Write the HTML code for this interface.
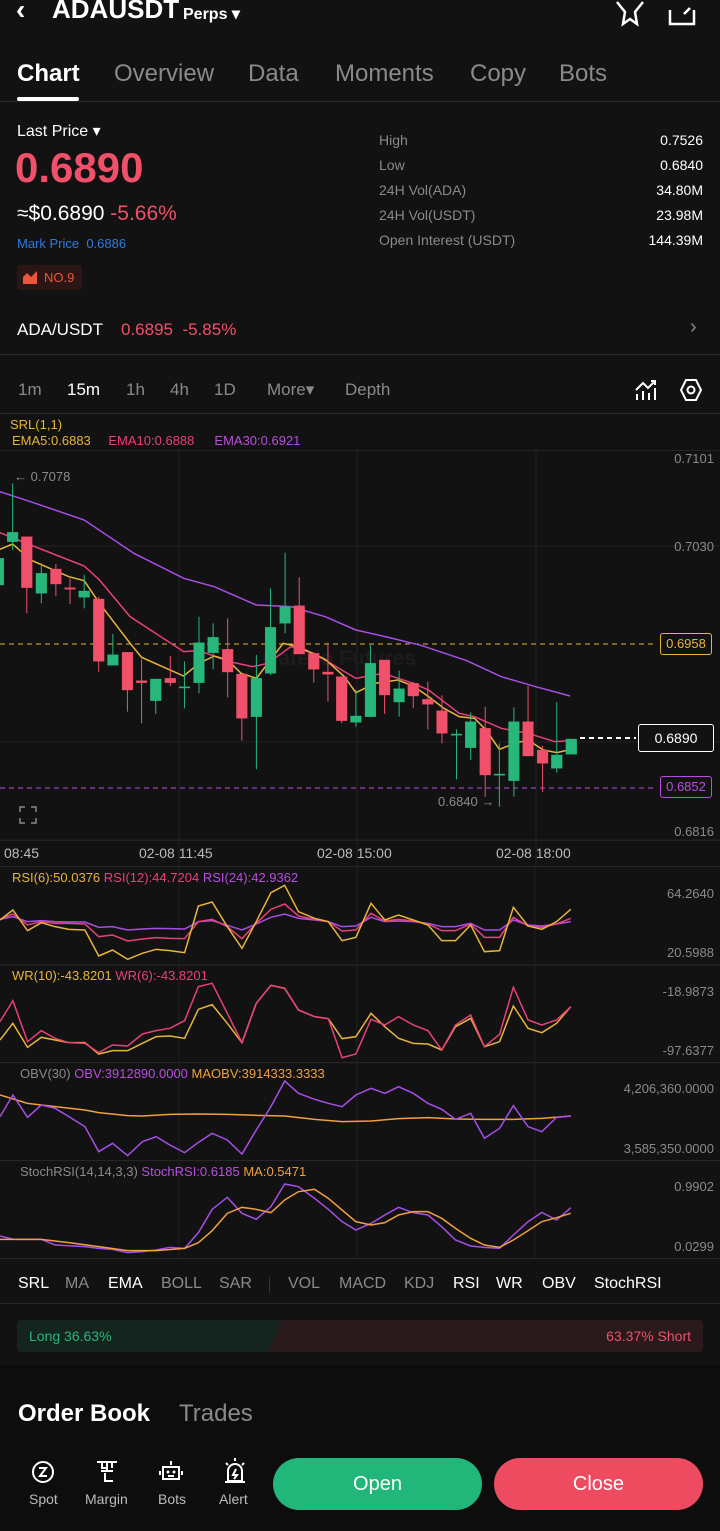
<!DOCTYPE html>
<html><head><meta charset="utf-8">
<style>
*{margin:0;padding:0;box-sizing:border-box}
body{width:720px;height:1531px;background:#121212;color:#fff;font-family:"Liberation Sans",sans-serif;position:relative;overflow:hidden}
.a{position:absolute;white-space:nowrap}
.g{color:#8a8a8a}
.r{color:#f0506a}
.sm{font-size:14px}
</style></head><body>
<!-- header -->
<div class="a" style="left:16px;top:-6px;font-size:28px;font-weight:bold;">‹</div>
<div class="a" style="left:52px;top:-6px;font-size:26px;font-weight:bold;">ADAUSDT</div>
<div class="a" style="left:183px;top:4px;font-size:16px;font-weight:bold;">Perps ▾</div>
<svg class="a" style="left:614px;top:0px" width="32" height="28" viewBox="0 0 32 28"><path d="M3 2 L11 12 L9 24 L16 19 L23 24 L21 12 L29 2" fill="none" stroke="#fff" stroke-width="2.5"/></svg>
<svg class="a" style="left:666px;top:4px" width="32" height="24" viewBox="0 0 32 24"><path d="M4 6 V20 H28 V6 M18 10 L24 4" fill="none" stroke="#fff" stroke-width="2.5"/></svg>
<!-- tabs -->
<div class="a" style="left:17px;top:60px;font-size:24px;font-weight:bold">Chart</div>
<div class="a" style="left:17px;top:97px;width:62px;height:4px;background:#fff;border-radius:2px"></div>
<div class="a g" style="left:114px;top:60px;font-size:24px">Overview</div>
<div class="a g" style="left:248px;top:60px;font-size:24px">Data</div>
<div class="a g" style="left:335px;top:60px;font-size:24px">Moments</div>
<div class="a g" style="left:470px;top:60px;font-size:24px">Copy</div>
<div class="a g" style="left:559px;top:60px;font-size:24px">Bots</div>
<div class="a" style="left:0;top:101px;width:720px;height:1px;background:#2a2a2a"></div>
<!-- price -->
<div class="a" style="left:17px;top:121px;font-size:16px">Last Price ▾</div>
<div class="a r" style="left:15px;top:144px;font-size:42px;font-weight:bold">0.6890</div>
<div class="a" style="left:17px;top:202px;font-size:21px">≈$0.6890 <span class="r">-5.66%</span></div>
<div class="a sm" style="left:17px;top:236px;color:#2f7ae0;font-size:13px">Mark Price&nbsp;&nbsp;0.6886</div>
<div class="a" style="left:17px;top:265px;width:65px;height:25px;background:#2a1614;border-radius:3px;color:#f0553a;font-size:13px;padding:5px 0 0 27px">NO.9</div>
<svg class="a" style="left:22px;top:269px" width="16" height="16"><path d="M1 15 V8 L5 4 L9 8 L15 2 V15 Z" fill="#f0553a"/></svg>
<div class="a g" style="left:379px;top:128px;font-size:14px;line-height:25px">High<br>Low<br>24H Vol(ADA)<br>24H Vol(USDT)<br>Open Interest (USDT)</div>
<div class="a" style="right:17px;top:128px;font-size:14px;line-height:25px;text-align:right">0.7526<br>0.6840<br>34.80M<br>23.98M<br>144.39M</div>
<div class="a" style="left:17px;top:320px;font-size:17px">ADA/USDT</div>
<div class="a r" style="left:121px;top:320px;font-size:17px">0.6895&nbsp;&nbsp;-5.85%</div>
<div class="a g" style="left:690px;top:316px;font-size:20px">›</div>
<div class="a" style="left:0;top:354px;width:720px;height:1px;background:#2a2a2a"></div>
<!-- timeframes -->
<div class="a g" style="left:18px;top:380px;font-size:17px">1m</div>
<div class="a" style="left:67px;top:380px;font-size:17px">15m</div>
<div class="a g" style="left:126px;top:380px;font-size:17px">1h</div>
<div class="a g" style="left:170px;top:380px;font-size:17px">4h</div>
<div class="a g" style="left:214px;top:380px;font-size:17px">1D</div>
<div class="a g" style="left:267px;top:380px;font-size:17px">More▾</div>
<div class="a g" style="left:345px;top:380px;font-size:17px">Depth</div>
<svg class="a" style="left:634px;top:378px" width="24" height="24"><path d="M3 22 V16 M9 22 V13 M15 22 V15 M21 22 V10 M2 12 L9 5 L14 10 L21 3 M17 3 H21 V7" fill="none" stroke="#fff" stroke-width="2"/></svg>
<svg class="a" style="left:679px;top:378px" width="24" height="24"><path d="M7 2 H17 L22 12 L17 22 H7 L2 12 Z" fill="none" stroke="#fff" stroke-width="2"/><circle cx="12" cy="12" r="3.5" fill="none" stroke="#fff" stroke-width="2"/></svg>
<div class="a" style="left:0;top:413px;width:720px;height:1px;background:#2a2a2a"></div>
<div class="a" style="left:10px;top:417px;font-size:13px;color:#e7b53a">SRL(1,1)</div>
<div class="a" style="left:12px;top:433px;font-size:13px;color:#e7b53a">EMA5:0.6883 <span style="color:#e8407a;margin-left:14px">EMA10:0.6888</span><span style="color:#b84ee0;margin-left:20px">EMA30:0.6921</span></div>
<div class="a" style="left:0;top:450px;width:720px;height:1px;background:#222"></div>

<!-- grid main -->
<svg class="a" style="left:0;top:450px" width="720" height="418">
<g stroke="#222" stroke-width="1"><line x1="179" y1="0" x2="179" y2="418"/><line x1="357" y1="0" x2="357" y2="418"/><line x1="536" y1="0" x2="536" y2="418"/>
<line x1="0" y1="96" x2="720" y2="96"/><line x1="0" y1="292" x2="720" y2="292"/><line x1="0" y1="390" x2="720" y2="390"/></g>
<line x1="0" y1="194" x2="655" y2="194" stroke="#e7b53a" stroke-dasharray="5,4"/>
<line x1="0" y1="338" x2="655" y2="338" stroke="#b84ee0" stroke-dasharray="5,4"/>
<line x1="580" y1="288" x2="636" y2="288" stroke="#fff" stroke-width="2" stroke-dasharray="5,4"/>
</svg>
<div class="a" style="left:262px;top:647px;font-size:21px;color:#1c1c1c;font-weight:bold">Gate.io Futures</div>

<svg class="a" style="left:0;top:460px" width="600" height="350" viewBox="0 0 1568 1050" preserveAspectRatio="none">
<g fill="none" stroke-width="1.5">
<polyline vector-effect="non-scaling-stroke" stroke="#a84ee8" points="0,95 80,125 220,180 350,280 480,355 560,380 670,435 760,440 850,470 930,510 1000,528 1100,556 1220,602 1310,650 1400,680 1490,708"/>
<polyline vector-effect="non-scaling-stroke" stroke="#e8407a" points="0,218 80,255 220,318 260,360 340,470 480,575 520,572 600,605 660,620 700,610 760,560 820,580 930,655 1000,640 1080,670 1120,690 1200,760 1240,770 1310,805 1380,820 1450,845 1490,842"/>
<polyline vector-effect="non-scaling-stroke" stroke="#e7b53a" points="0,268 33,252 80,300 180,350 220,362 260,430 340,550 370,592 480,648 520,610 560,588 595,600 630,640 670,655 740,550 780,560 850,598 900,650 930,698 980,670 1040,660 1080,678 1120,710 1160,745 1200,770 1240,775 1270,810 1305,868 1345,850 1380,840 1420,870 1455,878 1493,868"/>
</g>
<g stroke-width="1">
<g fill="#27b77b" stroke="#27b77b">
<line x1="0" y1="295" x2="0" y2="375" vector-effect="non-scaling-stroke"/><rect x="-14" y="295" width="24" height="80"/>
<line x1="33" y1="70" x2="33" y2="270" vector-effect="non-scaling-stroke"/><rect x="19" y="217" width="28" height="28"/>
<line x1="108" y1="310" x2="108" y2="430" vector-effect="non-scaling-stroke"/><rect x="94" y="340" width="28" height="60"/>
<line x1="220" y1="345" x2="220" y2="445" vector-effect="non-scaling-stroke"/><rect x="206" y="393" width="28" height="19"/>
<line x1="295" y1="522" x2="295" y2="616" vector-effect="non-scaling-stroke"/><rect x="281" y="584" width="28" height="32"/>
<line x1="407" y1="657" x2="407" y2="762" vector-effect="non-scaling-stroke"/><rect x="393" y="657" width="28" height="65"/>
<line x1="482" y1="604" x2="482" y2="745" vector-effect="non-scaling-stroke"/><rect x="468" y="680" width="28" height="4"/>
<line x1="520" y1="470" x2="520" y2="700" vector-effect="non-scaling-stroke"/><rect x="506" y="548" width="28" height="120"/>
<line x1="557" y1="490" x2="557" y2="628" vector-effect="non-scaling-stroke"/><rect x="543" y="532" width="28" height="46"/>
<line x1="670" y1="585" x2="670" y2="928" vector-effect="non-scaling-stroke"/><rect x="656" y="655" width="28" height="115"/>
<line x1="707" y1="385" x2="707" y2="645" vector-effect="non-scaling-stroke"/><rect x="693" y="502" width="28" height="138"/>
<line x1="745" y1="278" x2="745" y2="520" vector-effect="non-scaling-stroke"/><rect x="731" y="440" width="28" height="50"/>
<line x1="930" y1="690" x2="930" y2="800" vector-effect="non-scaling-stroke"/><rect x="916" y="768" width="28" height="19"/>
<line x1="968" y1="555" x2="968" y2="770" vector-effect="non-scaling-stroke"/><rect x="954" y="610" width="28" height="160"/>
<line x1="1043" y1="632" x2="1043" y2="770" vector-effect="non-scaling-stroke"/><rect x="1029" y="686" width="28" height="40"/>
<line x1="1193" y1="808" x2="1193" y2="958" vector-effect="non-scaling-stroke"/><rect x="1179" y="822" width="28" height="4"/>
<line x1="1230" y1="757" x2="1230" y2="900" vector-effect="non-scaling-stroke"/><rect x="1216" y="785" width="28" height="78"/>
<line x1="1305" y1="850" x2="1305" y2="1040" vector-effect="non-scaling-stroke"/><rect x="1291" y="942" width="28" height="4"/>
<line x1="1343" y1="742" x2="1343" y2="1010" vector-effect="non-scaling-stroke"/><rect x="1329" y="785" width="28" height="177"/>
<line x1="1455" y1="727" x2="1455" y2="938" vector-effect="non-scaling-stroke"/><rect x="1441" y="885" width="28" height="40"/>
<rect x="1479" y="837" width="28" height="46"/>
</g>
<g fill="#f0506a" stroke="#f0506a">
<line x1="70" y1="230" x2="70" y2="460" vector-effect="non-scaling-stroke"/><rect x="56" y="230" width="28" height="153"/>
<line x1="146" y1="312" x2="146" y2="408" vector-effect="non-scaling-stroke"/><rect x="132" y="327" width="28" height="45"/>
<line x1="183" y1="355" x2="183" y2="432" vector-effect="non-scaling-stroke"/><rect x="169" y="383" width="28" height="5"/>
<line x1="258" y1="410" x2="258" y2="635" vector-effect="non-scaling-stroke"/><rect x="244" y="417" width="28" height="187"/>
<line x1="333" y1="577" x2="333" y2="755" vector-effect="non-scaling-stroke"/><rect x="319" y="577" width="28" height="113"/>
<line x1="370" y1="598" x2="370" y2="790" vector-effect="non-scaling-stroke"/><rect x="356" y="662" width="28" height="6"/>
<line x1="445" y1="588" x2="445" y2="678" vector-effect="non-scaling-stroke"/><rect x="431" y="655" width="28" height="13"/>
<line x1="595" y1="475" x2="595" y2="712" vector-effect="non-scaling-stroke"/><rect x="581" y="568" width="28" height="68"/>
<line x1="632" y1="642" x2="632" y2="842" vector-effect="non-scaling-stroke"/><rect x="618" y="642" width="28" height="133"/>
<line x1="782" y1="352" x2="782" y2="582" vector-effect="non-scaling-stroke"/><rect x="768" y="437" width="28" height="145"/>
<line x1="820" y1="578" x2="820" y2="668" vector-effect="non-scaling-stroke"/><rect x="806" y="580" width="28" height="48"/>
<line x1="857" y1="548" x2="857" y2="725" vector-effect="non-scaling-stroke"/><rect x="843" y="636" width="28" height="7"/>
<line x1="893" y1="650" x2="893" y2="790" vector-effect="non-scaling-stroke"/><rect x="879" y="650" width="28" height="132"/>
<line x1="1005" y1="600" x2="1005" y2="762" vector-effect="non-scaling-stroke"/><rect x="991" y="600" width="28" height="105"/>
<line x1="1080" y1="665" x2="1080" y2="745" vector-effect="non-scaling-stroke"/><rect x="1066" y="670" width="28" height="38"/>
<line x1="1118" y1="665" x2="1118" y2="808" vector-effect="non-scaling-stroke"/><rect x="1104" y="718" width="28" height="15"/>
<line x1="1155" y1="706" x2="1155" y2="850" vector-effect="non-scaling-stroke"/><rect x="1141" y="752" width="28" height="68"/>
<line x1="1268" y1="740" x2="1268" y2="1010" vector-effect="non-scaling-stroke"/><rect x="1254" y="805" width="28" height="140"/>
<line x1="1380" y1="678" x2="1380" y2="888" vector-effect="non-scaling-stroke"/><rect x="1366" y="785" width="28" height="103"/>
<line x1="1418" y1="858" x2="1418" y2="996" vector-effect="non-scaling-stroke"/><rect x="1404" y="870" width="28" height="40"/>
</g></g>
</svg>
<div class="a g" style="left:14px;top:469px;font-size:13px">← 0.7078</div>
<div class="a g" style="left:438px;top:794px;font-size:13px">0.6840 →</div>
<svg class="a" style="left:18px;top:805px" width="20" height="20"><path d="M2 7 V2 H7 M13 2 H18 V7 M18 13 V18 H13 M7 18 H2 V13" fill="none" stroke="#888" stroke-width="1.5"/></svg>
<!-- right axis -->
<div class="a g" style="right:6px;top:451px;font-size:13px">0.7101</div>
<div class="a g" style="right:6px;top:539px;font-size:13px">0.7030</div>
<div class="a" style="left:660px;top:633px;width:52px;height:22px;border:1px solid #e7b53a;border-radius:3px;color:#e7b53a;font-size:13px;text-align:center;line-height:20px;background:#121212">0.6958</div>
<div class="a" style="left:638px;top:724px;width:76px;height:28px;border:1px solid #fff;border-radius:3px;color:#fff;font-size:14px;text-align:center;line-height:26px;background:#121212">0.6890</div>
<div class="a" style="left:660px;top:776px;width:52px;height:22px;border:1px solid #b84ee0;border-radius:3px;color:#b84ee0;font-size:13px;text-align:center;line-height:20px;background:#121212">0.6852</div>
<div class="a g" style="right:6px;top:824px;font-size:13px">0.6816</div>
<div class="a" style="left:0;top:840px;width:720px;height:1px;background:#222"></div>
<div class="a" style="left:4px;top:845px;font-size:14px;color:#bbb">08:45</div>
<div class="a" style="left:139px;top:845px;font-size:14px;color:#bbb">02-08 11:45</div>
<div class="a" style="left:317px;top:845px;font-size:14px;color:#bbb">02-08 15:00</div>
<div class="a" style="left:496px;top:845px;font-size:14px;color:#bbb">02-08 18:00</div>

<!-- indicators -->
<svg class="a" style="left:0;top:860px" width="720" height="400" viewBox="0 0 1568 1200" preserveAspectRatio="none">
<g stroke="#2a2a2a" stroke-width="1"><line x1="0" y1="20" x2="1568" y2="20" vector-effect="non-scaling-stroke"/><line x1="0" y1="315" x2="1568" y2="315" vector-effect="non-scaling-stroke"/><line x1="0" y1="608" x2="1568" y2="608" vector-effect="non-scaling-stroke"/><line x1="0" y1="902" x2="1568" y2="902" vector-effect="non-scaling-stroke"/><line x1="0" y1="1196" x2="1568" y2="1196" vector-effect="non-scaling-stroke"/></g>
<g stroke="#202020"><line x1="390" y1="20" x2="390" y2="1196" vector-effect="non-scaling-stroke"/><line x1="777" y1="20" x2="777" y2="1196" vector-effect="non-scaling-stroke"/><line x1="1165" y1="20" x2="1165" y2="1196" vector-effect="non-scaling-stroke"/></g>
<g fill="none" stroke-width="1.5">
<polyline vector-effect="non-scaling-stroke" stroke="#a84ee8" points="0,178 28,170 60,185 90,182 120,185 150,186 185,186 215,202 245,200 278,210 310,207 340,205 370,206 402,207 432,185 462,182 495,196 527,210 558,192 590,172 620,162 650,175 685,180 715,185 745,200 775,198 808,172 838,185 868,183 900,185 932,190 962,200 992,200 1025,190 1055,210 1088,210 1118,180 1150,195 1180,198 1212,192 1243,185"/>
<polyline vector-effect="non-scaling-stroke" stroke="#e8407a" points="0,178 28,162 60,195 90,185 120,190 150,190 185,192 215,230 245,225 278,243 310,237 340,233 370,235 402,236 432,185 462,178 495,200 527,236 558,190 590,148 620,132 650,168 685,178 715,185 745,213 775,210 808,160 838,183 868,178 900,183 932,192 962,212 992,212 1025,192 1055,232 1088,232 1118,172 1150,198 1180,202 1212,192 1243,175"/>
<polyline vector-effect="non-scaling-stroke" stroke="#e7b53a" points="0,180 28,150 60,212 90,188 120,200 150,208 185,210 215,288 245,270 278,298 310,280 340,268 370,272 402,278 432,138 462,126 495,200 527,265 558,185 590,98 620,76 650,155 685,175 715,185 745,242 775,232 808,130 838,180 868,165 900,180 932,195 962,242 992,242 1025,195 1055,275 1088,272 1118,142 1150,198 1180,208 1212,185 1243,148"/>
<polyline vector-effect="non-scaling-stroke" stroke="#e7b53a" points="0,540 28,490 60,562 90,532 120,540 150,548 185,548 215,582 245,572 278,572 310,550 340,530 370,528 402,535 432,448 462,434 495,490 527,548 558,430 590,376 620,385 650,450 685,470 715,476 745,536 775,530 808,460 838,500 868,535 900,550 932,552 962,570 992,500 1025,475 1055,560 1088,545 1118,438 1150,505 1180,518 1212,490 1243,440"/>
<polyline vector-effect="non-scaling-stroke" stroke="#e8407a" points="0,485 28,422 60,545 90,512 120,535 150,548 185,550 215,578 245,555 278,558 310,522 340,512 370,505 402,482 432,380 462,370 495,460 527,548 558,430 590,376 620,385 650,450 685,470 715,476 745,593 775,582 808,478 838,495 868,470 900,495 932,512 962,570 992,495 1025,465 1055,560 1088,523 1118,382 1150,480 1180,495 1212,480 1243,440"/>
<polyline vector-effect="non-scaling-stroke" stroke="#f0a040" points="0,705 60,730 120,740 185,750 215,758 278,767 310,768 370,763 432,762 495,763 558,766 620,768 685,778 745,785 808,783 868,776 932,773 992,777 1055,778 1118,778 1180,775 1243,768"/>
<polyline vector-effect="non-scaling-stroke" stroke="#a84ee8" points="0,770 28,705 60,772 90,735 120,745 150,770 185,800 215,875 245,850 278,887 310,845 340,830 370,855 402,878 432,847 462,820 495,840 527,882 558,810 590,740 620,663 650,700 685,718 715,730 745,740 775,705 808,685 838,700 868,680 900,700 932,730 962,748 992,778 1025,760 1055,835 1088,805 1118,737 1150,800 1180,815 1212,772 1243,768"/>
<polyline vector-effect="non-scaling-stroke" stroke="#a84ee8" points="0,1128 30,1138 90,1138 120,1155 185,1160 215,1165 245,1168 278,1178 310,1175 340,1170 370,1162 402,1165 432,1118 462,1048 495,1012 527,1060 558,1078 590,1040 620,972 650,980 685,1015 715,1048 745,1085 775,1110 808,1090 838,1065 868,1042 900,1058 932,1065 962,1100 992,1140 1025,1158 1055,1162 1088,1165 1118,1125 1150,1085 1180,1057 1212,1080 1243,1043"/>
<polyline vector-effect="non-scaling-stroke" stroke="#f0a040" points="0,1138 90,1138 150,1148 215,1160 278,1172 340,1172 402,1165 432,1148 462,1112 495,1060 527,1042 558,1048 590,1058 620,1020 650,995 685,988 715,1015 745,1050 775,1085 808,1095 838,1088 868,1065 900,1055 932,1055 962,1075 992,1105 1025,1135 1055,1155 1088,1162 1118,1140 1150,1112 1180,1085 1212,1073 1243,1060"/>
</g></svg>
<div class="a" style="left:12px;top:870px;font-size:13px;color:#e7b53a">RSI(6):50.0376 <span style="color:#e8407a">RSI(12):44.7204</span> <span style="color:#b84ee0">RSI(24):42.9362</span></div>
<div class="a g" style="right:6px;top:886px;font-size:13px">64.2640</div>
<div class="a g" style="right:6px;top:945px;font-size:13px">20.5988</div>
<div class="a" style="left:12px;top:968px;font-size:13px;color:#e7b53a">WR(10):-43.8201 <span style="color:#e8407a">WR(6):-43.8201</span></div>
<div class="a g" style="right:6px;top:984px;font-size:13px">-18.9873</div>
<div class="a g" style="right:6px;top:1043px;font-size:13px">-97.6377</div>
<div class="a g" style="left:20px;top:1066px;font-size:13px">OBV(30) <span style="color:#b84ee0">OBV:3912890.0000</span> <span style="color:#f0a040">MAOBV:3914333.3333</span></div>
<div class="a g" style="right:6px;top:1081px;font-size:13px">4,206,360.0000</div>
<div class="a g" style="right:6px;top:1141px;font-size:13px">3,585,350.0000</div>
<div class="a g" style="left:20px;top:1164px;font-size:13px">StochRSI(14,14,3,3) <span style="color:#b84ee0">StochRSI:0.6185</span> <span style="color:#f0a040">MA:0.5471</span></div>
<div class="a g" style="right:6px;top:1179px;font-size:13px">0.9902</div>
<div class="a g" style="right:6px;top:1239px;font-size:13px">0.0299</div>
<!-- indicator tabs -->
<div class="a" style="left:18px;top:1275px;font-size:16px">SRL</div>
<div class="a g" style="left:65px;top:1275px;font-size:16px">MA</div>
<div class="a" style="left:108px;top:1275px;font-size:16px">EMA</div>
<div class="a g" style="left:161px;top:1275px;font-size:16px">BOLL</div>
<div class="a g" style="left:219px;top:1275px;font-size:16px">SAR</div>
<div class="a" style="left:269px;top:1277px;width:1px;height:16px;background:#333"></div>
<div class="a g" style="left:288px;top:1275px;font-size:16px">VOL</div>
<div class="a g" style="left:339px;top:1275px;font-size:16px">MACD</div>
<div class="a g" style="left:404px;top:1275px;font-size:16px">KDJ</div>
<div class="a" style="left:453px;top:1275px;font-size:16px">RSI</div>
<div class="a" style="left:496px;top:1275px;font-size:16px">WR</div>
<div class="a" style="left:542px;top:1275px;font-size:16px">OBV</div>
<div class="a" style="left:594px;top:1275px;font-size:16px">StochRSI</div>
<div class="a" style="left:0;top:1303px;width:720px;height:1px;background:#2a2a2a"></div>
<!-- long short -->
<div class="a" style="left:17px;top:1320px;width:686px;height:32px;background:#2a1a1c;border-radius:4px;overflow:hidden">
<div style="position:absolute;left:0;top:0;width:265px;height:32px;background:#14251f;clip-path:polygon(0 0,100% 0,95% 100%,0 100%)"></div></div>
<div class="a" style="left:29px;top:1328px;font-size:14px;color:#27b77b">Long 36.63%</div>
<div class="a" style="right:29px;top:1328px;font-size:14px;color:#f0506a">63.37% Short</div>
<div class="a" style="left:0;top:1365px;width:720px;height:166px;background:#0d0d0d"></div>
<div class="a" style="left:18px;top:1400px;font-size:24px;font-weight:bold">Order Book</div>
<div class="a g" style="left:179px;top:1400px;font-size:24px">Trades</div>
<!-- bottom bar -->
<svg class="a" style="left:31px;top:1460px" width="24" height="24"><circle cx="12" cy="12" r="10" fill="none" stroke="#fff" stroke-width="2"/><path d="M8 8 H15 L9 16 H16" fill="none" stroke="#fff" stroke-width="2"/></svg>
<svg class="a" style="left:95px;top:1459px" width="24" height="26"><path d="M2 3 H22 M7 3 V9 H12 M17 3 V9 M12 3 V12 M6 12 H18 M10 14 V22 H18" fill="none" stroke="#fff" stroke-width="2"/></svg>
<svg class="a" style="left:158px;top:1459px" width="26" height="26"><path d="M13 2 V6 M5 8 H21 V20 H5 Z M2 12 V16 M24 12 V16" fill="none" stroke="#fff" stroke-width="2"/><circle cx="10" cy="13" r="1.5" fill="#fff"/><circle cx="16" cy="13" r="1.5" fill="#fff"/><path d="M10 17 H16" stroke="#fff" stroke-width="2"/></svg>
<svg class="a" style="left:222px;top:1457px" width="26" height="28"><path d="M13 1 V4 M4 6 L6 8 M22 6 L20 8 M6 24 V14 A7 7 0 0 1 20 14 V24 Z M3 25 H23 M14 12 L11 18 H15 L12 22" fill="none" stroke="#fff" stroke-width="2"/></svg>
<div class="a" style="left:29px;top:1491px;font-size:14px;color:#bbb">Spot</div>
<div class="a" style="left:85px;top:1491px;font-size:14px;color:#bbb">Margin</div>
<div class="a" style="left:158px;top:1491px;font-size:14px;color:#bbb">Bots</div>
<div class="a" style="left:219px;top:1491px;font-size:14px;color:#bbb">Alert</div>
<div class="a" style="left:273px;top:1458px;width:209px;height:52px;border-radius:26px;background:#21b77a;font-size:20px;text-align:center;line-height:52px">Open</div>
<div class="a" style="left:494px;top:1458px;width:209px;height:52px;border-radius:26px;background:#ee4b61;font-size:20px;text-align:center;line-height:52px">Close</div>
</body></html>
